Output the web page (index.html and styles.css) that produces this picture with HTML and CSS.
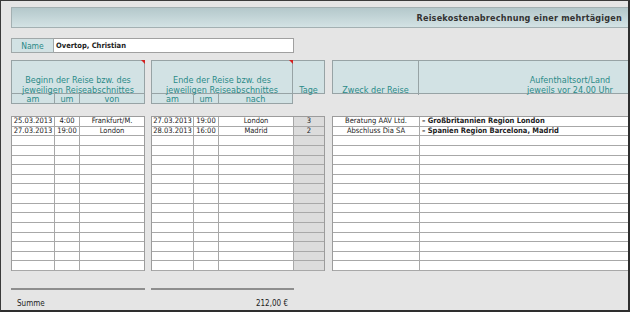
FILE: index.html
```html
<!DOCTYPE html>
<html lang="de">
<head>
<meta charset="utf-8">
<title>Reisekostenabrechnung</title>
<link rel="stylesheet" href="styles.css">
</head>
<body>
<div class="sheet">
  <div class="titlebar"><span class="title">Reisekostenabrechnung einer mehrtägigen</span></div>

  <div class="namerow">
    <div class="namelabel">Name</div>
    <div class="namevalue">Overtop, Christian</div>
  </div>

  <div class="headrow">
    <div class="hgroup hg1">
      <div class="htitle">Beginn der Reise bzw. des<br>jeweiligen Reiseabschnittes</div>
      <div class="hsub cols1"><span>am</span><span>um</span><span>von</span></div>
      <span class="note"></span>
    </div>
    <div class="hgroup hg2">
      <div class="htitle">Ende der Reise bzw. des<br>jeweiligen Reiseabschnittes</div>
      <div class="hsub cols2h"><span>am</span><span>um</span><span>nach</span></div>
      <span class="note"></span>
    </div>
    <div class="tage">Tage</div>
    <div class="hg3">
      <div class="zweck">Zweck der Reise</div>
      <div class="ort">Aufenthaltsort/Land<br>jeweils vor 24.00 Uhr</div>
    </div>
  </div>

  <div class="datarow">
    <div class="dgroup dg1">
      <div class="drow cols1"><span>25.03.2013</span><span>4:00</span><span>Frankfurt/M.</span></div>
      <div class="drow cols1"><span>27.03.2013</span><span>19:00</span><span>London</span></div>
      <div class="drow cols1"><span></span><span></span><span></span></div>
      <div class="drow cols1"><span></span><span></span><span></span></div>
      <div class="drow cols1"><span></span><span></span><span></span></div>
      <div class="drow cols1"><span></span><span></span><span></span></div>
      <div class="drow cols1"><span></span><span></span><span></span></div>
      <div class="drow cols1"><span></span><span></span><span></span></div>
      <div class="drow cols1"><span></span><span></span><span></span></div>
      <div class="drow cols1"><span></span><span></span><span></span></div>
      <div class="drow cols1"><span></span><span></span><span></span></div>
      <div class="drow cols1"><span></span><span></span><span></span></div>
      <div class="drow cols1"><span></span><span></span><span></span></div>
      <div class="drow cols1"><span></span><span></span><span></span></div>
      <div class="drow cols1"><span></span><span></span><span></span></div>
      <div class="drow cols1"><span></span><span></span><span></span></div>
    </div>
    <div class="dgroup dg2">
      <div class="drow cols2"><span>27.03.2013</span><span>19:00</span><span>London</span><span class="td">3</span></div>
      <div class="drow cols2"><span>28.03.2013</span><span>16:00</span><span>Madrid</span><span class="td">2</span></div>
      <div class="drow cols2"><span></span><span></span><span></span><span class="td"></span></div>
      <div class="drow cols2"><span></span><span></span><span></span><span class="td"></span></div>
      <div class="drow cols2"><span></span><span></span><span></span><span class="td"></span></div>
      <div class="drow cols2"><span></span><span></span><span></span><span class="td"></span></div>
      <div class="drow cols2"><span></span><span></span><span></span><span class="td"></span></div>
      <div class="drow cols2"><span></span><span></span><span></span><span class="td"></span></div>
      <div class="drow cols2"><span></span><span></span><span></span><span class="td"></span></div>
      <div class="drow cols2"><span></span><span></span><span></span><span class="td"></span></div>
      <div class="drow cols2"><span></span><span></span><span></span><span class="td"></span></div>
      <div class="drow cols2"><span></span><span></span><span></span><span class="td"></span></div>
      <div class="drow cols2"><span></span><span></span><span></span><span class="td"></span></div>
      <div class="drow cols2"><span></span><span></span><span></span><span class="td"></span></div>
      <div class="drow cols2"><span></span><span></span><span></span><span class="td"></span></div>
      <div class="drow cols2"><span></span><span></span><span></span><span class="td"></span></div>
    </div>
    <div class="dgroup dg3">
      <div class="drow cols3"><span>Beratung AAV Ltd.</span><span class="ortval">– Großbritannien Region London</span></div>
      <div class="drow cols3"><span>Abschluss Dia SA</span><span class="ortval">– Spanien Region Barcelona, Madrid</span></div>
      <div class="drow cols3"><span></span><span></span></div>
      <div class="drow cols3"><span></span><span></span></div>
      <div class="drow cols3"><span></span><span></span></div>
      <div class="drow cols3"><span></span><span></span></div>
      <div class="drow cols3"><span></span><span></span></div>
      <div class="drow cols3"><span></span><span></span></div>
      <div class="drow cols3"><span></span><span></span></div>
      <div class="drow cols3"><span></span><span></span></div>
      <div class="drow cols3"><span></span><span></span></div>
      <div class="drow cols3"><span></span><span></span></div>
      <div class="drow cols3"><span></span><span></span></div>
      <div class="drow cols3"><span></span><span></span></div>
      <div class="drow cols3"><span></span><span></span></div>
      <div class="drow cols3"><span></span><span></span></div>
    </div>
  </div>

  <div class="sumlines"><div class="sl1"></div><div class="sl2"></div></div>
  <div class="summe"><span>Summe</span><span>212,00 €</span></div>
</div>
</body>
</html>
```

FILE: styles.css
```css
html, body {
  margin: 0;
  padding: 0;
  background: #e4e4e4;
}

.sheet {
  box-sizing: border-box;
  width: 630px;
  height: 312px;
  overflow: hidden;
  background: #e5e5e5;
  border-left: 1px solid #3a3a3a;
  border-top: 1px solid #3a3a3a;
  border-right: 2px solid #2e2e2e;
  border-bottom: 2px solid #2e2e2e;
  padding-left: 10px;
  font-family: "DejaVu Sans Condensed", "DejaVu Sans", sans-serif;
  color: #222;
}

.titlebar {
  margin-top: 6px;
  height: 21px;
  box-sizing: border-box;
  border: 1px solid #a3b0b2;
  border-right: none;
  background: linear-gradient(#b4c8cb, #d3e2e4);
  display: flex;
  align-items: center;
  justify-content: flex-end;
  padding-right: 6px;
}

.title {
  font-size: 9px;
  font-weight: bold;
  letter-spacing: 0.2px;
  color: #333;
}

.namerow {
  margin-top: 10px;
  display: flex;
  height: 15px;
}

.namelabel {
  box-sizing: border-box;
  width: 43px;
  border: 1px solid #a0a8a9;
  background: #d2e2e4;
  color: #2b8a88;
  font-size: 8.5px;
  display: flex;
  align-items: center;
  justify-content: center;
}

.namevalue {
  box-sizing: border-box;
  width: 240px;
  border: 1px solid #a0a0a0;
  border-left: none;
  background: #fff;
  font-size: 7.5px;
  font-weight: bold;
  display: flex;
  align-items: center;
  padding-left: 2px;
}

.headrow {
  margin-top: 7px;
  display: flex;
  align-items: flex-start;
  color: #2b8a88;
  font-size: 9px;
}

.hgroup {
  position: relative;
  box-sizing: border-box;
  height: 44px;
  border: 1px solid #97a3a5;
  background: #d2e2e4;
  display: flex;
  flex-direction: column;
  flex: none;
}

.hg1 { width: 134px; }
.hg2 { width: 142px; margin-left: 6px; }

.htitle {
  height: 33px;
  flex: none;
  box-sizing: border-box;
  border-bottom: 1px solid #97a3a5;
  text-align: center;
  line-height: 10px;
  padding-top: 13.5px;
}

.hsub {
  display: grid;
  flex: 1;
  line-height: 10px;
}

.hsub span {
  text-align: center;
  border-right: 1px solid #97a3a5;
}

.hsub span:last-child { border-right: none; }

.note {
  position: absolute;
  top: -1px;
  right: -1px;
  width: 0;
  height: 0;
  border-top: 4px solid #d42020;
  border-left: 4px solid transparent;
}

.tage {
  flex: none;
  box-sizing: border-box;
  width: 32px;
  height: 34px;
  border: 1px solid #97a3a5;
  border-left: none;
  background: #d2e2e4;
  text-align: center;
  line-height: 10px;
  padding-top: 23.5px;
}

.hg3 {
  flex: none;
  margin-left: 7px;
  width: 390px;
  height: 34px;
  box-sizing: border-box;
  border: 1px solid #97a3a5;
  background: #d2e2e4;
  display: grid;
  grid-template-columns: 86px 1fr;
}

.zweck {
  border-right: 1px solid #97a3a5;
  text-align: center;
  line-height: 10px;
  padding-top: 23.5px;
}

.ort {
  text-align: center;
  line-height: 10px;
  padding-top: 13.5px;
}

.datarow {
  margin-top: 12px;
  display: flex;
  align-items: flex-start;
  font-size: 7.5px;
}

.dgroup {
  flex: none;
  box-sizing: border-box;
  border: 1px solid #9c9c9c;
  border-bottom: none;
  background: #fff;
}

.dg1 { width: 134px; }
.dg2 { width: 174px; margin-left: 6px; }
.dg3 { width: 400px; margin-left: 7px; }

.drow {
  display: grid;
  box-sizing: border-box;
  height: 9.625px;
  border-bottom: 1px solid #a8a8a8;
  line-height: 8.6px;
}

.drow span {
  text-align: center;
  border-right: 1px solid #a8a8a8;
  white-space: nowrap;
  overflow: hidden;
}

.drow span:last-child { border-right: none; }

.cols1 { grid-template-columns: 43px 25px 1fr; }
.cols2h { grid-template-columns: 42px 25px 1fr; }
.cols2 { grid-template-columns: 42px 25px 75px 1fr; }
.cols3 { grid-template-columns: 87px 1fr; }

.drow .td {
  background: #dcdcdc;
}

.drow .ortval {
  text-align: left;
  font-weight: bold;
  padding-left: 2px;
}

.sumlines {
  margin-top: 17px;
  display: flex;
}

.sl1, .sl2 {
  height: 2px;
  background: #8e8e8e;
}

.sl1 { width: 134px; }
.sl2 { width: 143px; margin-left: 6px; }

.summe {
  margin-top: 9px;
  width: 277px;
  display: flex;
  justify-content: space-between;
  font-size: 8px;
  line-height: 10px;
  padding-left: 6px;
  box-sizing: border-box;
}
```
